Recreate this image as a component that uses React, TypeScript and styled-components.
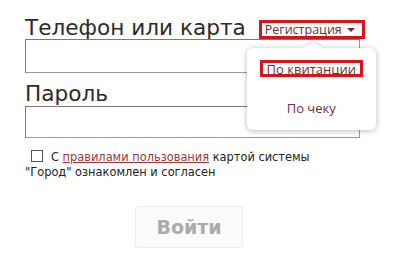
import React from "react";
import styled, { createGlobalStyle } from "styled-components";

const Global = createGlobalStyle`
  html, body { margin: 0; padding: 0; background: #fff; }
  body { font-family: "DejaVu Sans", Verdana, sans-serif; }
`;

const Form = styled.div`
  width: 335px;
  padding: 16px 0 0 25px;
`;

const LabelRow = styled.div`
  display: flex;
  align-items: flex-start;
`;

const Label = styled.div<{ $top?: number }>`
  flex-shrink: 0;
  white-space: nowrap;
  font-family: "DejaVu Sans", Verdana, sans-serif;
  font-size: 21.6px;
  line-height: 23px;
  color: #2b2b2b;
  margin-top: ${(p) => p.$top ?? 0}px;
`;

const Input = styled.div<{ $h: number; $top?: number }>`
  box-sizing: border-box;
  height: ${(p) => p.$h}px;
  margin-top: ${(p) => p.$top ?? 0}px;
  border: 1px solid #7a7a7a;
  border-right-color: #9a9a9a;
  border-bottom-color: #9a9a9a;
  background: #fff;
`;

const RegWrap = styled.div`
  position: relative;
  flex-shrink: 0;
  margin: 4px 0 0 13px;
`;

const RedBox = styled.div`
  box-sizing: border-box;
  border: 3px solid #d3151d;
  background: #fff;
  font-family: "Open Sans", "Noto Sans", sans-serif;
  color: #6d2e3a;
  display: flex;
  align-items: center;
  white-space: nowrap;
`;

const RegButton = styled(RedBox)`
  width: 106px;
  height: 19px;
  padding-left: 3px;
  gap: 4px;
  font-size: 12.5px;
`;

const Caret = styled.span`
  width: 0;
  height: 0;
  border-left: 4px solid transparent;
  border-right: 4px solid transparent;
  border-top: 4px solid #6d2e3a;
  margin-left: 1px;
`;

const Menu = styled.div`
  position: absolute;
  left: -12px;
  top: 28px;
  width: 129px;
  height: 82px;
  box-sizing: border-box;
  background: #fff;
  border-radius: 6px;
  box-shadow: 0 1px 6px rgba(0, 0, 0, 0.28);
  display: flex;
  flex-direction: column;
  align-items: center;
  padding-top: 12px;
  &::before {
    content: "";
    position: absolute;
    top: -6px;
    left: 56px;
    width: 0;
    height: 0;
    border-left: 10px solid transparent;
    border-right: 10px solid transparent;
    border-bottom: 6px solid #fff;
    filter: drop-shadow(0 -1px 1px rgba(0, 0, 0, 0.15));
  }
`;

const MenuActive = styled(RedBox)`
  width: 103px;
  height: 17px;
  justify-content: center;
  font-size: 13px;
`;

const MenuItem = styled.div`
  margin-top: 22px;
  font-family: "Open Sans", "Noto Sans", sans-serif;
  font-size: 13px;
  color: #6d2e3a;
`;

const Agree = styled.div`
  margin-top: 12px;
  font-family: "DejaVu Sans", Verdana, sans-serif;
  font-size: 11.4px;
  line-height: 15px;
  color: #222;
`;

const Check = styled.span`
  display: inline-block;
  box-sizing: border-box;
  width: 12px;
  height: 12px;
  border: 1px solid #555;
  margin: 0 8px -1px 6px;
  vertical-align: baseline;
`;

const Link = styled.a`
  color: #9b3a3a;
  text-decoration: underline;
`;

const Submit = styled.button`
  margin: 26px 0 0 110px;
  width: 108px;
  height: 42px;
  box-sizing: border-box;
  border: 1px solid #ececec;
  border-radius: 3px;
  background: #fbfbfb;
  font-family: "DejaVu Sans", Verdana, sans-serif;
  font-weight: bold;
  font-size: 19px;
  color: #ababab;
  padding: 0;
`;

export default function App() {
  return (
    <>
      <Global />
      <Form>
        <LabelRow>
          <Label>Телефон или карта</Label>
          <RegWrap>
            <RegButton>
              Регистрация <Caret />
            </RegButton>
            <Menu>
              <MenuActive>По квитанции</MenuActive>
              <MenuItem>По чеку</MenuItem>
            </Menu>
          </RegWrap>
        </LabelRow>
        <Input $h={34} />
        <Label $top={9}>Пароль</Label>
        <Input $h={32} $top={1} />
        <Agree>
          <Check />С <Link>правилами пользования</Link> картой системы
          <br />
          "Город" ознакомлен и согласен
        </Agree>
        <Submit>Войти</Submit>
      </Form>
    </>
  );
}
